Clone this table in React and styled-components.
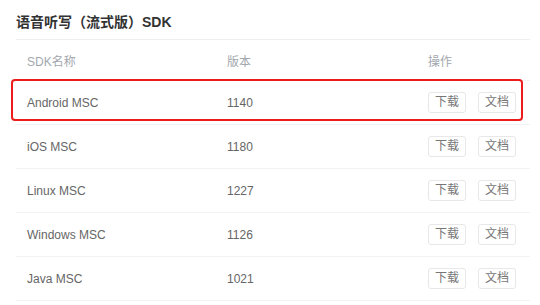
import React from "react";
import styled, { createGlobalStyle } from "styled-components";

const Global = createGlobalStyle`
  html, body { margin: 0; padding: 0; background: #fff; }
  body { font-family: "Liberation Sans", Arial, "Noto Sans CJK SC", sans-serif; }
`;

const Page = styled.div`
  width: 540px;
  height: 305px;
  box-sizing: border-box;
  padding: 0 10px 0 16px;
  overflow: hidden;
  background: #fff;
`;

const Title = styled.h2`
  margin: 0;
  padding: 12px 0 7px;
  font-size: 14px;
  line-height: 20px;
  font-weight: bold;
  color: #333;
  border-bottom: 1px solid #eeeff1;
`;

const Row = styled.div`
  position: relative;
  display: grid;
  grid-template-columns: 200px 201px 1fr;
  align-items: center;
  box-sizing: border-box;
  height: ${(p) => (p.$head ? "41px" : "44px")};
  border-bottom: 1px solid #f1f2f4;
  font-size: 12px;
  color: ${(p) => (p.$head ? "#a2a7ae" : "#666")};
`;

const Cell = styled.div`
  padding-left: 11px;
  display: flex;
  gap: 12px;
  align-items: center;
`;

const Highlight = styled.div`
  position: absolute;
  left: -5px;
  right: 7px;
  top: -2px;
  bottom: 3px;
  border: 2px solid #ec1c1c;
  border-radius: 4px;
  pointer-events: none;
`;

const Btn = styled.button`
  box-sizing: border-box;
  height: 21px;
  width: 38px;
  padding: 0;
  border: 1px solid #e8e8e8;
  border-radius: 3px;
  background: #fff;
  font-family: inherit;
  font-size: 12px;
  line-height: 19px;
  color: #777;
  cursor: pointer;
`;

const data = [
  { name: "Android MSC", ver: "1140", hl: true },
  { name: "iOS MSC", ver: "1180" },
  { name: "Linux MSC", ver: "1227" },
  { name: "Windows MSC", ver: "1126" },
  { name: "Java MSC", ver: "1021" },
];

export default function App() {
  return (
    <Page>
      <Global />
      <Title>语音听写（流式版）SDK</Title>
      <Row $head>
        <Cell>SDK名称</Cell>
        <Cell>版本</Cell>
        <Cell>操作</Cell>
      </Row>
      {data.map((d) => (
        <Row key={d.name}>
          <Cell>{d.name}</Cell>
          <Cell>{d.ver}</Cell>
          <Cell>
            <Btn>下载</Btn>
            <Btn>文档</Btn>
          </Cell>
          {d.hl && <Highlight />}
        </Row>
      ))}
    </Page>
  );
}
